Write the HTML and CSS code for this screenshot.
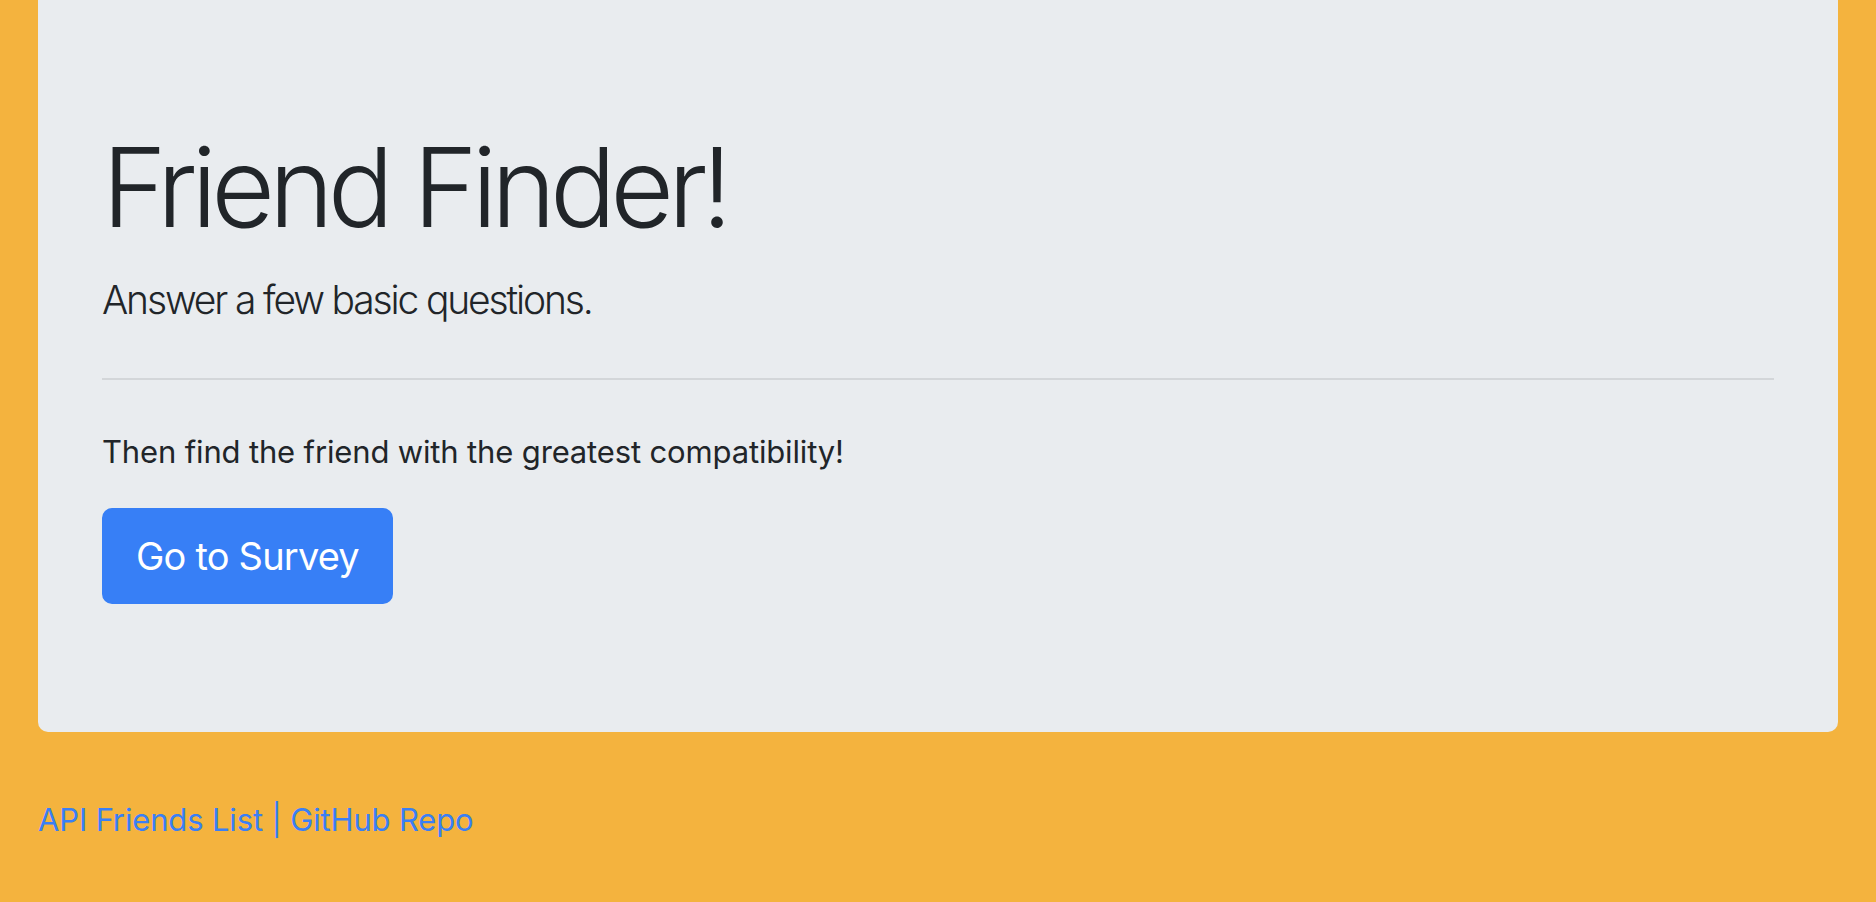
FILE: index.html
```html
<!DOCTYPE html>
<html lang="en">
<head>
<meta charset="utf-8">
<title>Friend Finder</title>
<link rel="stylesheet" href="styles.css">
</head>
<body>
<div class="page">
  <div class="jumbotron">
    <h1 class="display">Friend Finder!</h1>
    <p class="lead">Answer a few basic questions.</p>
    <hr class="rule">
    <p class="text">Then find the friend with the greatest compatibility!</p>
    <div class="actions"><a class="btn" href="#">Go to Survey</a></div>
  </div>
  <footer class="footer">
    <a class="link" href="#">API Friends List</a><span class="sep"> | </span><a class="link" href="#">GitHub Repo</a>
  </footer>
</div>
</body>
</html>
```
FILE: styles.css
```css
html, body {
  margin: 0;
  padding: 0;
}
body {
  background: #f4b33e;
  font-family: Inter, "Liberation Sans", sans-serif;
  color: #212529;
  font-size: 32px;
  line-height: 1.5;
  height: 902px;
  overflow: hidden;
}
.page {
  padding: 0 38px;
}
.jumbotron {
  background: #e9ecef;
  border-radius: 0 0 10px 10px;
  padding: 120px 64px 128px;
  margin-bottom: 64px;
}
.display {
  margin: 0 0 16px;
  font-size: 110px;
  font-weight: 300;
  line-height: 134.4px;
  letter-spacing: -6px;
}
.lead {
  margin: 0;
  font-size: 39px;
  font-weight: 300;
  line-height: 60px;
  letter-spacing: -2.15px;
}
.rule {
  margin: 48px 0;
  border: 0;
  border-top: 2px solid #d3d6d9;
  height: 0;
}
.text {
  margin: 0 0 32px;
  font-size: 31px;
  line-height: 48px;
  letter-spacing: -0.15px;
}
.actions {
  display: flex;
}
.btn {
  display: inline-block;
  background: #377ff6;
  color: #fff;
  border: 2px solid #377ff6;
  border-radius: 10px;
  padding: 16px 32px;
  font-size: 38px;
  line-height: 60px;
  text-decoration: none;
  letter-spacing: -0.8px;
}
.footer {
  font-size: 31px;
  line-height: 48px;
  color: #377ff6;
  letter-spacing: -0.15px;
}
.link {
  color: #3a7ff5;
  text-decoration: none;
}
.sep {
  white-space: pre;
}
```
